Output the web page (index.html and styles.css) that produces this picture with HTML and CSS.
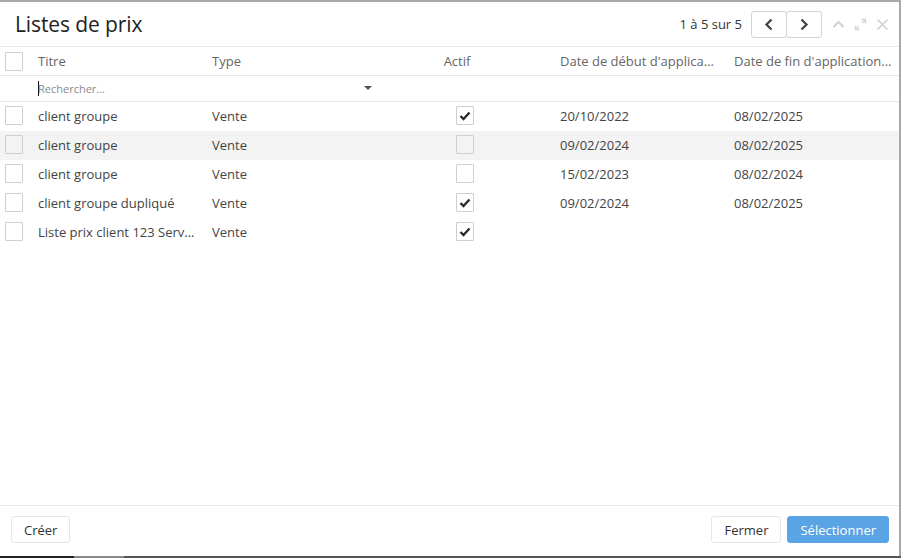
FILE: index.html
```html
<!DOCTYPE html>
<html lang="fr">
<head>
<meta charset="utf-8">
<title>Listes de prix</title>
<link rel="stylesheet" href="styles.css">
</head>
<body>
<div class="dialog">
  <header class="dlg-head">
    <h1 class="title">Listes de prix</h1>
    <div class="pager">
      <span class="pager-text">1 à 5 sur 5</span>
      <div class="pager-btns">
        <button class="pbtn" aria-label="Précédent"><svg width="10" height="13" viewBox="0 0 10 13"><polyline points="7.5,1.5 2.5,6.5 7.5,11.5" fill="none" stroke="#444" stroke-width="2.3"/></svg></button>
        <button class="pbtn" aria-label="Suivant"><svg width="10" height="13" viewBox="0 0 10 13"><polyline points="2.5,1.5 7.5,6.5 2.5,11.5" fill="none" stroke="#444" stroke-width="2.3"/></svg></button>
      </div>
      <div class="win-icons">
        <svg class="wi" width="13" height="13" viewBox="0 0 13 13"><polyline points="1.5,9 6.5,4 11.5,9" fill="none" stroke="#d0d0d0" stroke-width="2"/></svg>
        <svg class="wi" width="13" height="13" viewBox="0 0 13 13"><path d="M7.5 1.5h4v4M11.5 1.5l-3.5 3.5M5.5 11.5h-4v-4M1.5 11.5l3.5-3.5" fill="none" stroke="#d6d6d6" stroke-width="1.4"/></svg>
        <svg class="wi" width="13" height="13" viewBox="0 0 13 13"><path d="M1.5 1.5l10 10M11.5 1.5l-10 10" fill="none" stroke="#cfcfcf" stroke-width="1.6"/></svg>
      </div>
    </div>
  </header>

  <div class="table">
    <div class="row head-row">
      <div class="cell cb-cell"><span class="cb"></span></div>
      <div class="cell">Titre</div>
      <div class="cell">Type</div>
      <div class="cell center actif-head">Actif</div>
      <div class="cell">Date de début d'applica...</div>
      <div class="cell">Date de fin d'application...</div>
    </div>
    <div class="row search-row">
      <div class="cell cb-cell"></div>
      <div class="search-cell">
        <span class="cursor"></span><span class="placeholder">Rechercher...</span>
        <span class="caret"></span>
      </div>
      <div class="cell"></div>
      <div class="cell"></div>
      <div class="cell"></div>
    </div>

    <div class="row data-row">
      <div class="cell cb-cell"><span class="cb"></span></div>
      <div class="cell">client groupe</div>
      <div class="cell">Vente</div>
      <div class="cell center"><span class="cb on"><svg width="12" height="10" viewBox="0 0 12 10"><polyline points="1.5,5 4.5,8 10.5,1.5" fill="none" stroke="#2b2b2b" stroke-width="2.4"/></svg></span></div>
      <div class="cell">20/10/2022</div>
      <div class="cell">08/02/2025</div>
    </div>
    <div class="row data-row hover">
      <div class="cell cb-cell"><span class="cb"></span></div>
      <div class="cell">client groupe</div>
      <div class="cell">Vente</div>
      <div class="cell center"><span class="cb"></span></div>
      <div class="cell">09/02/2024</div>
      <div class="cell">08/02/2025</div>
    </div>
    <div class="row data-row">
      <div class="cell cb-cell"><span class="cb"></span></div>
      <div class="cell">client groupe</div>
      <div class="cell">Vente</div>
      <div class="cell center"><span class="cb"></span></div>
      <div class="cell">15/02/2023</div>
      <div class="cell">08/02/2024</div>
    </div>
    <div class="row data-row">
      <div class="cell cb-cell"><span class="cb"></span></div>
      <div class="cell">client groupe dupliqué</div>
      <div class="cell">Vente</div>
      <div class="cell center"><span class="cb on"><svg width="12" height="10" viewBox="0 0 12 10"><polyline points="1.5,5 4.5,8 10.5,1.5" fill="none" stroke="#2b2b2b" stroke-width="2.4"/></svg></span></div>
      <div class="cell">09/02/2024</div>
      <div class="cell">08/02/2025</div>
    </div>
    <div class="row data-row">
      <div class="cell cb-cell"><span class="cb"></span></div>
      <div class="cell">Liste prix client 123 Serv...</div>
      <div class="cell">Vente</div>
      <div class="cell center"><span class="cb on"><svg width="12" height="10" viewBox="0 0 12 10"><polyline points="1.5,5 4.5,8 10.5,1.5" fill="none" stroke="#2b2b2b" stroke-width="2.4"/></svg></span></div>
      <div class="cell"></div>
      <div class="cell"></div>
    </div>
  </div>

  <footer class="dlg-foot">
    <button class="btn">Créer</button>
    <div class="foot-right">
      <button class="btn">Fermer</button>
      <button class="btn primary">Sélectionner</button>
    </div>
  </footer>
</div>
<div class="bottom-strip"></div>
</body>
</html>
```

FILE: styles.css
```css
* { box-sizing: border-box; }

html, body {
  margin: 0;
  padding: 0;
}

body {
  width: 901px;
  height: 558px;
  overflow: hidden;
  background: #a8a8a8;
  font-family: "Open Sans", "Noto Sans", sans-serif;
  font-size: 13px;
  color: #444;
}

.dialog {
  margin-top: 2px;
  width: 899px;
  height: 554px;
  background: #fff;
  display: flex;
  flex-direction: column;
}

.dlg-head {
  height: 45px;
  flex: none;
  border-bottom: 1px solid #e8e8e8;
  display: flex;
  align-items: center;
  justify-content: space-between;
  padding: 0 10px 0 15px;
}

.title {
  margin: 0;
  font-size: 21px;
  font-weight: 400;
  color: #222;
  letter-spacing: -0.1px;
}

.pager {
  display: flex;
  align-items: center;
}

.pager-text {
  color: #333;
  font-size: 13px;
  margin-right: 9px;
}

.pager-btns {
  display: flex;
}

.pbtn {
  width: 36px;
  height: 27px;
  padding: 0;
  border: 1px solid #d4d4d4;
  background: #fff;
  border-radius: 3px;
  display: flex;
  align-items: center;
  justify-content: center;
}
.pbtn + .pbtn {
  margin-left: -1px;
}

.win-icons {
  display: flex;
  align-items: center;
  gap: 9px;
  margin-left: 10px;
}
.wi { display: block; }

.table {
  flex: 1;
}

.row {
  display: grid;
  grid-template-columns: 30px 174px 174px 174px 174px 173px;
  align-items: center;
}

.cell {
  padding: 0 8px;
  white-space: nowrap;
  overflow: hidden;
}
.cell.center {
  display: flex;
  justify-content: center;
}
.cb-cell {
  padding: 0 0 0 5px;
  display: flex;
}

.head-row {
  height: 29px;
  border-bottom: 1px solid #e8e8e8;
  color: #666;
}
.actif-head {
  padding-right: 24px;
}

.search-row {
  height: 26px;
  border-bottom: 1px solid #e8e8e8;
}
.search-cell {
  grid-column: span 2;
  position: relative;
  display: flex;
  align-items: center;
  padding-left: 8px;
  height: 100%;
}
.cursor {
  width: 1px;
  height: 15px;
  background: #111;
}
.placeholder {
  font-size: 11px;
  color: #8a8a8a;
  margin-left: -1px;
}
.caret {
  position: absolute;
  right: 6px;
  top: 10px;
  width: 0;
  height: 0;
  border-left: 4px solid transparent;
  border-right: 4px solid transparent;
  border-top: 4px solid #555;
}

.data-row {
  height: 29px;
  padding-bottom: 2px;
  color: #444;
}
.data-row.hover {
  background: #f3f3f3;
}

.cb {
  width: 18px;
  height: 19px;
  border: 1px solid #cfcfcf;
  border-radius: 1px;
  display: flex;
  align-items: center;
  justify-content: center;
}

.dlg-foot {
  height: 51px;
  flex: none;
  border-top: 1px solid #e8e8e8;
  display: flex;
  justify-content: space-between;
  align-items: flex-start;
  padding: 10px 10px 0 11px;
}

.foot-right {
  display: flex;
  gap: 6px;
}

.btn {
  height: 27px;
  padding: 0 12px;
  font-family: "Open Sans", "Noto Sans", sans-serif;
  font-size: 13px;
  color: #333;
  background: #fff;
  border: 1px solid #e6e6e6;
  border-radius: 3px;
}
.btn.primary {
  background: #5aa4e5;
  border-color: #5aa4e5;
  color: #fff;
}

.bottom-strip {
  height: 2px;
  background: linear-gradient(to right, #222 0, #222 74px, #888 74px, #888 124px, #555 124px, #555 100%);
}
```
